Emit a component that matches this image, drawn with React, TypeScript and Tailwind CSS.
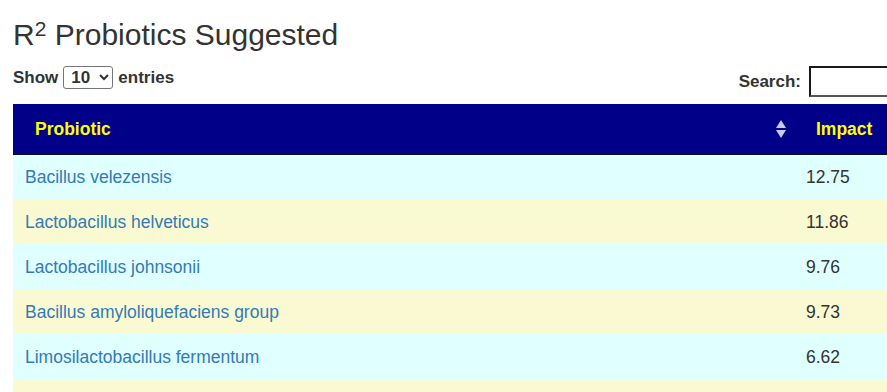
import { useState } from "react";

interface Row {
  name: string;
  impact: string;
}

const rows: Row[] = [
  { name: "Bacillus velezensis", impact: "12.75" },
  { name: "Lactobacillus helveticus", impact: "11.86" },
  { name: "Lactobacillus johnsonii", impact: "9.76" },
  { name: "Bacillus amyloliquefaciens group", impact: "9.73" },
  { name: "Limosilactobacillus fermentum", impact: "6.62" },
  { name: "Lactobacillus acidophilus", impact: "5.90" },
];

function SortIcon() {
  return (
    <svg width="10" height="18" viewBox="0 0 10 18" className="absolute right-[8px] top-1/2 -translate-y-1/2">
      <path d="M5 0 L10 8 L0 8 Z" fill="#c9c9ea" />
      <path d="M0 10 L10 10 L5 18 Z" fill="#c9c9ea" />
    </svg>
  );
}

export default function App() {
  const [size, setSize] = useState("10");
  const [query, setQuery] = useState("");

  return (
    <div className="w-full min-h-screen overflow-hidden bg-white text-[#333] font-['Liberation_Sans',Arial,sans-serif]">
      <div className="ml-[13px] w-[960px]">
        {/* Title */}
        <h1 className="pt-[18px] text-[30px] leading-[33px] font-normal">
          R<sup className="text-[21px] relative -top-[9px]">2</sup> Probiotics Suggested
        </h1>

        {/* Controls */}
        <div className="mt-[15px] flex justify-between items-start">
          <label className="flex items-center gap-[5px] text-[17px] font-bold leading-[23px]">
            Show
            <select
              value={size}
              onChange={(e) => setSize(e.target.value)}
              className="h-[23px] w-[50px] border border-[#767676] rounded-[3px] px-[3px] bg-white text-[17px] font-bold"
            >
              <option value="10">10</option>
              <option value="25">25</option>
              <option value="50">50</option>
            </select>
            entries
          </label>
          <label className="flex items-center gap-[8px] text-[17px] font-bold">
            Search:
            <input
              type="text"
              value={query}
              onChange={(e) => setQuery(e.target.value)}
              className="h-[31px] w-[164px] border-2 border-t-[#1a1a1a] border-l-[#1a1a1a] border-r-[#555] border-b-[#555] bg-white"
            />
          </label>
        </div>

        {/* Table */}
        <table className="mt-[7px] w-full border-collapse text-[17.5px]">
          <thead>
            <tr className="bg-[#000088] border-b border-[#111]">
              <th className="relative h-[50px] w-[781px] p-0 pl-[22px] text-left font-bold text-[#ffff00]">
                Probiotic
                <SortIcon />
              </th>
              <th className="h-[50px] p-0 pl-[22px] text-left font-bold text-[#ffff00]">Impact</th>
            </tr>
          </thead>
          <tbody>
            {rows.map((r, i) => (
              <tr key={r.name} className={i % 2 === 0 ? "bg-[#e0ffff]" : "bg-[#fafad2]"}>
                <td className="h-[45px] p-0 pl-[12px] leading-[20px]">
                  <a href="#" className="text-[#337ab7]">
                    {r.name}
                  </a>
                </td>
                <td className="h-[45px] p-0 pl-[12px] leading-[20px] text-[#333]">{r.impact}</td>
              </tr>
            ))}
          </tbody>
        </table>
      </div>
    </div>
  );
}
